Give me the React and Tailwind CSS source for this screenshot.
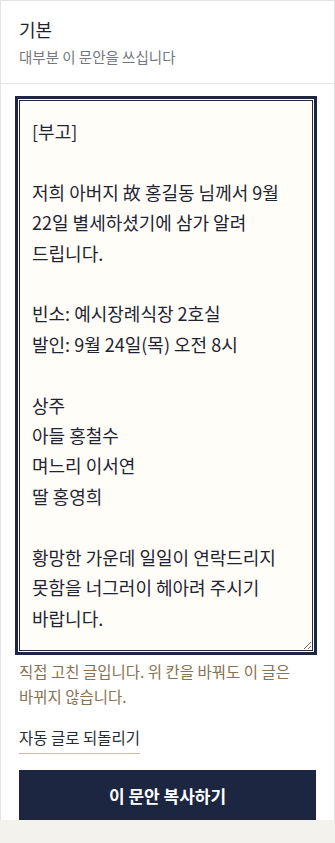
import React, { useState } from "react";

const initialText = `[부고]

저희 아버지 故 홍길동 님께서 9월 22일 별세하셨기에 삼가 알려 드립니다.

빈소: 예시장례식장 2호실
발인: 9월 24일(목) 오전 8시

상주
아들 홍철수
며느리 이서연
딸 홍영희

황망한 가운데 일일이 연락드리지 못함을 너그러이 헤아려 주시기 바랍니다.`;

const App = () => {
  const [text, setText] = useState(initialText);

  return (
    <div
      className="min-h-[843px] bg-[#f4f2ec]"
      style={{ fontFamily: '"Noto Sans CJK KR", "Noto Sans", sans-serif' }}
    >
      <section className="h-[820px] overflow-hidden bg-white border-x border-t border-[#e3e3e6]">
        <header className="px-[18px] pt-[16px] pb-[16px] border-b border-[#e3e3e6]">
          <h2 className="text-[18px] leading-6 font-normal text-[#1f2433]">기본</h2>
          <p className="mt-1.5 text-[14.5px] leading-5 text-[#737680]">
            대부분 이 문안을 쓰십니다
          </p>
        </header>

        <div className="px-[18px] pt-4">
          <textarea
            value={text}
            onChange={(e) => setText(e.target.value)}
            className="block w-[294px] h-[551px] px-3 pt-[15px] pb-[14px] text-[18px] leading-[30.4px] break-keep text-[#1f2433] bg-[#fffdf8] border border-[#1e2640] outline-3 outline-solid outline-offset-1 outline-[#1e2640] resize-y"
          />

          <p className="mt-2 text-[15.5px] leading-[25px] break-keep text-[#8a7150]">
            직접 고친 글입니다. 위 칸을 바꿔도 이 글은 바뀌지 않습니다.
          </p>

          <button className="mt-4 inline-block pb-1 text-[15.5px] leading-6 text-[#262b3a] border-b border-[#cbbda4]">
            자동 글로 되돌리기
          </button>

          <button className="mt-4 block w-full py-[14px] bg-[#1c2640] text-white text-[17px] leading-6 font-semibold">
            이 문안 복사하기
          </button>
        </div>
      </section>
    </div>
  );
};

export default App;
